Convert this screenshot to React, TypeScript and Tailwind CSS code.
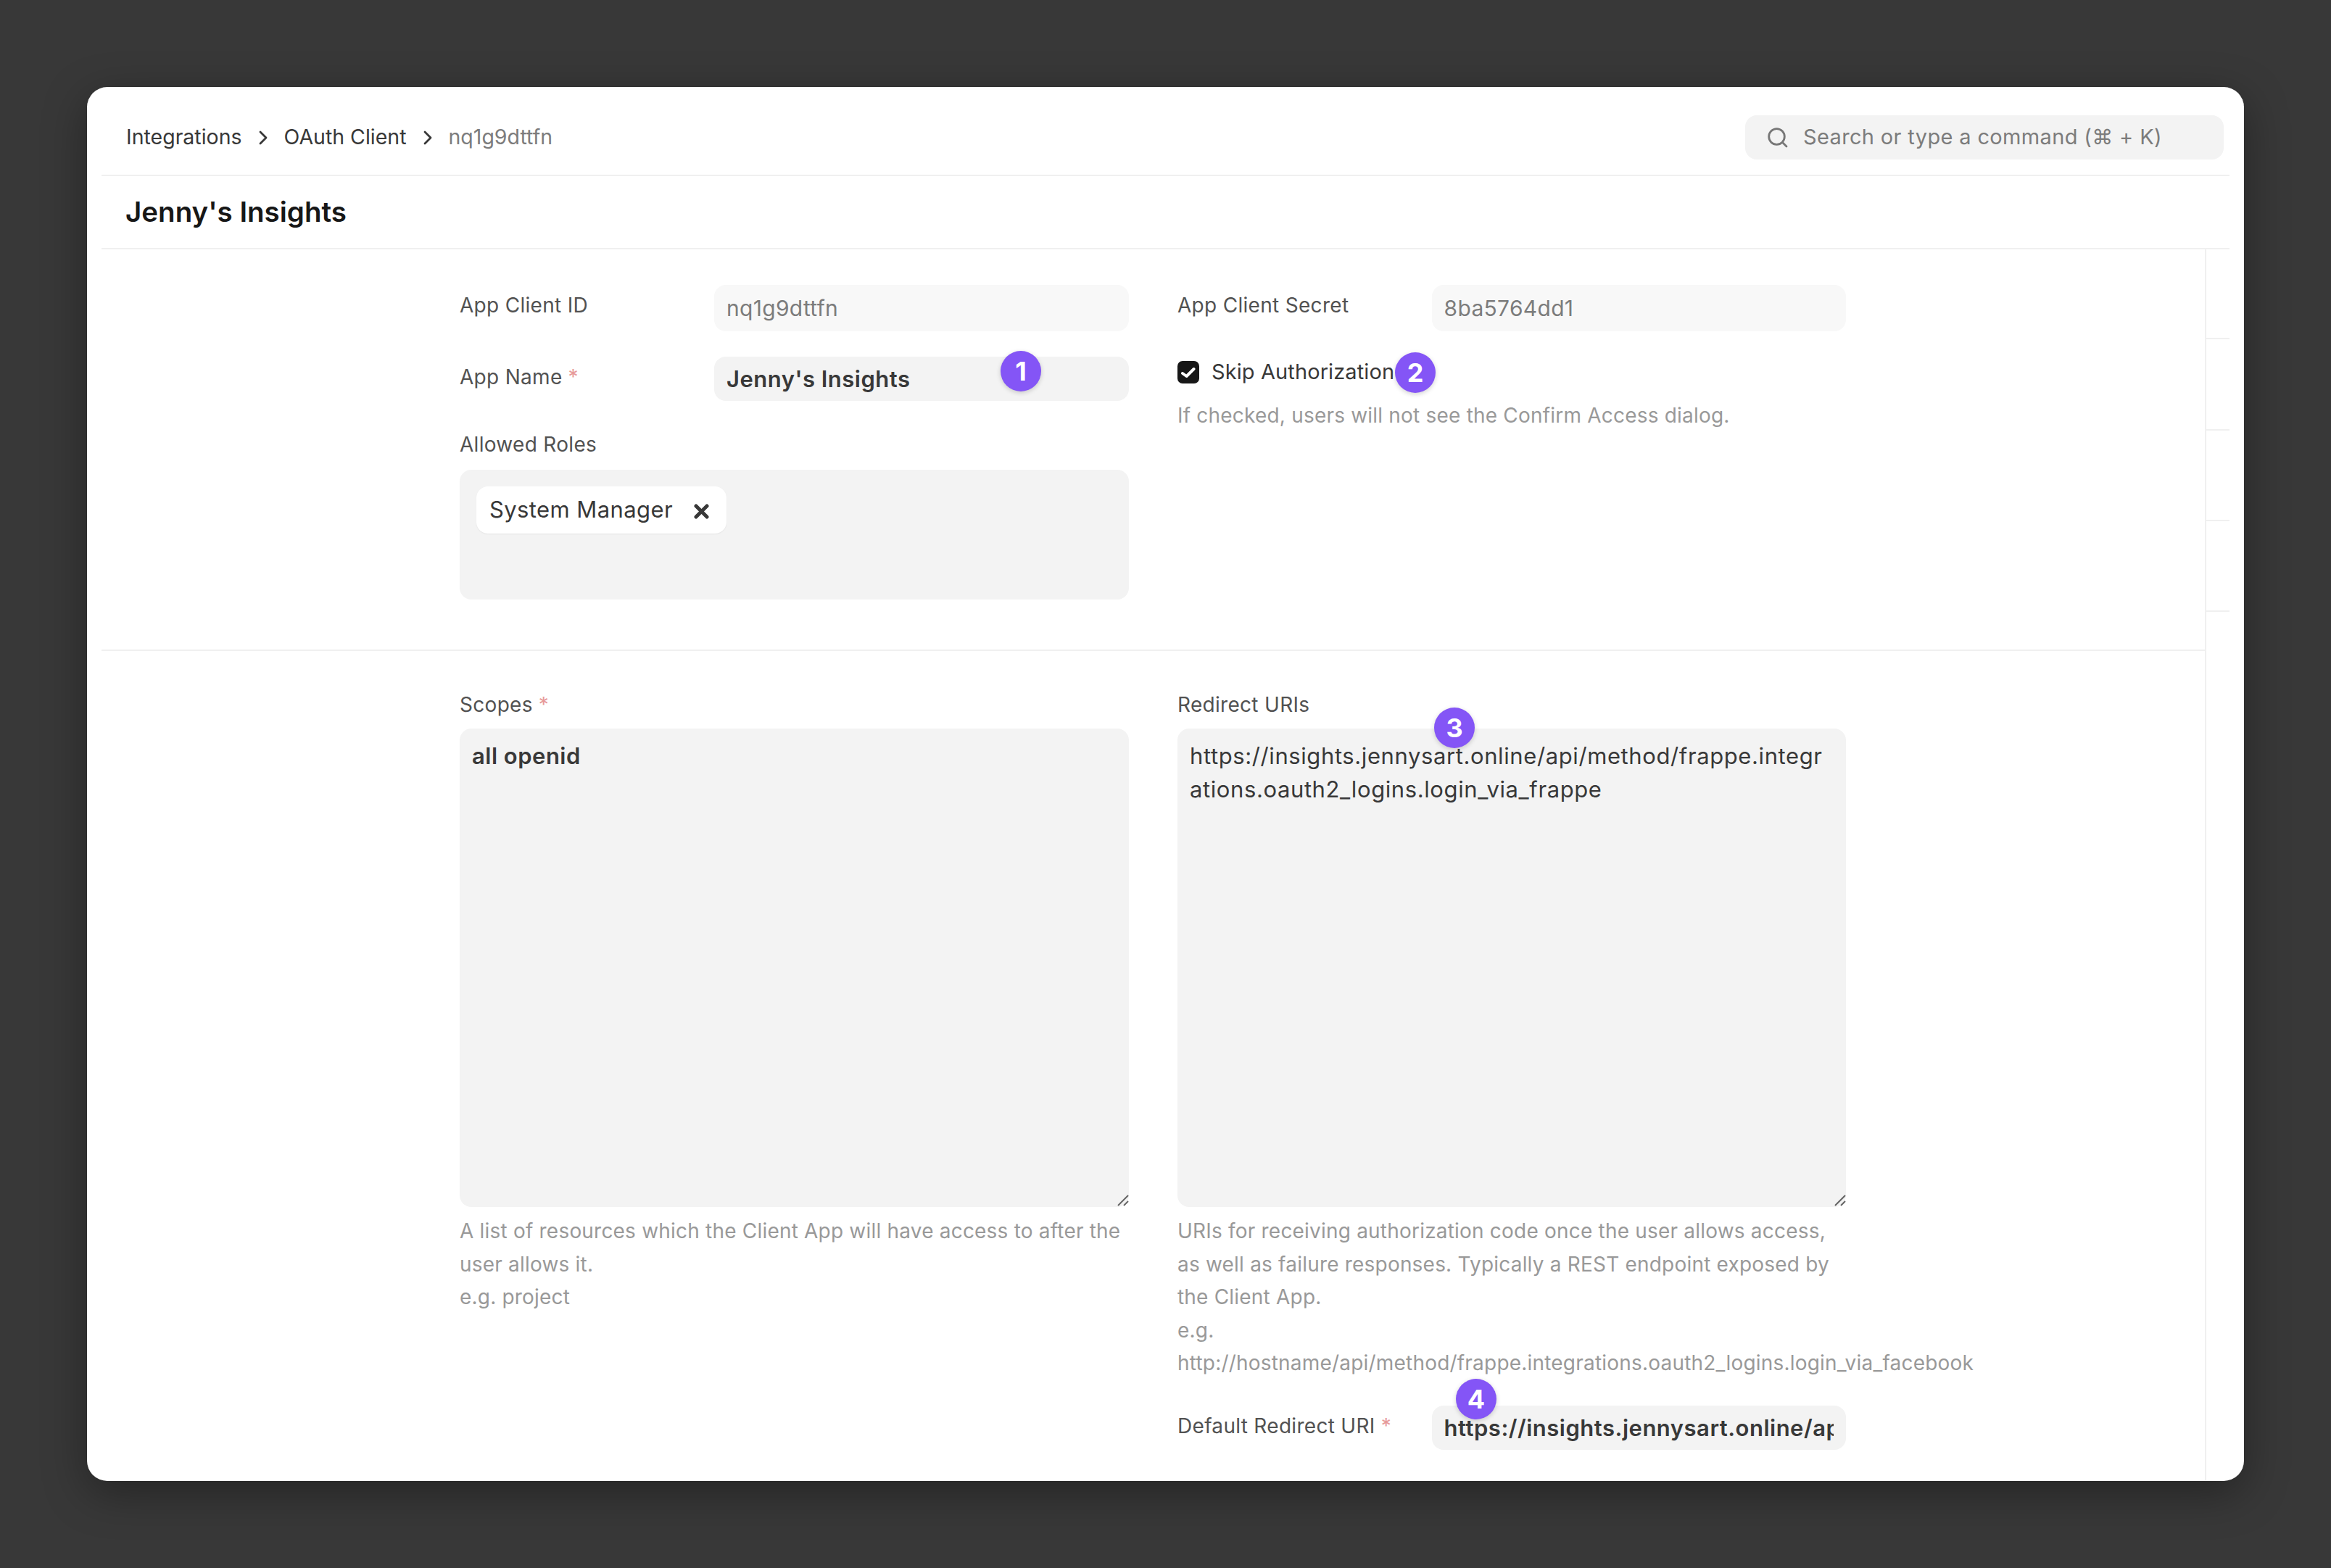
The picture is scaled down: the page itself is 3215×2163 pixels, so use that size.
import React from 'react';

const label = 'text-[28px] leading-[34px] text-[#525252] tracking-[0.3px]';
const help = 'text-[28px] leading-[45.5px] text-[#999999] tracking-[0.2px] whitespace-nowrap';

function Req() {
  return <span className="text-[#e79a9a] ml-[8px]">*</span>;
}

function Badge({ n, className }: { n: number; className: string }) {
  return (
    <div
      className={`absolute w-[56px] h-[56px] rounded-full bg-[#8455f6] text-white text-[36px] font-bold flex items-center justify-center shadow-[0_2px_6px_rgba(0,0,0,0.18)] ${className}`}
    >
      {n}
    </div>
  );
}

function ResizeGrip() {
  return (
    <svg className="absolute right-0 bottom-[1px]" width="16" height="16" viewBox="0 0 16 16" fill="none" stroke="#666666" strokeWidth="2">
      <path d="M1 15 L15 1" />
      <path d="M9 15 L15 9" />
    </svg>
  );
}

function Chevron() {
  return (
    <svg className="mx-[23px] mt-[2px]" width="12" height="20" viewBox="0 0 12 20" fill="none" stroke="#383838" strokeWidth="2.8" strokeLinecap="round" strokeLinejoin="round">
      <path d="M2 2 L10 10 L2 18" />
    </svg>
  );
}

function Field({
  labelText,
  value,
  required,
  disabled,
  h,
}: {
  labelText: string;
  value: string;
  required?: boolean;
  disabled?: boolean;
  h: string;
}) {
  return (
    <div className="flex items-start">
      <div className={`w-[351px] pt-[11px] ${label}`}>
        {labelText}
        {required && <Req />}
      </div>
      <div
        className={`w-[572px] ${h} rounded-[16px] px-[17px] flex items-center overflow-hidden ${
          disabled
            ? 'bg-[#f8f8f8] text-[#7c7c7c] font-normal text-[30px] tracking-[0.3px]'
            : 'bg-[#f3f3f3] text-[#383838] font-semibold text-[31px] tracking-[0.5px] pt-[2px]'
        }`}
      >
        <span className="overflow-hidden whitespace-nowrap">{value}</span>
      </div>
    </div>
  );
}

export default function App() {
  return (
    <div className="relative w-[3215px] h-[2163px] bg-[#383838] pt-[120px] pl-[120px] overflow-hidden font-['Inter',sans-serif]">
      <div className="w-[2975px] h-[1923px] bg-white rounded-[28px] px-[20px] flex flex-col overflow-hidden shadow-[0_16px_60px_rgba(0,0,0,0.35)]">
        {/* Top bar */}
        <div className="h-[123px] shrink-0 border-b-2 border-[#f0f0f0] pt-[39px] pb-[22px] pl-[34px] pr-[8px] flex items-center justify-between">
          <div className="flex items-center text-[28.5px] text-[#383838]">
            <span>Integrations</span>
            <Chevron />
            <span>OAuth Client</span>
            <Chevron />
            <span className="text-[#7c7c7c]">nq1g9dttfn</span>
          </div>
          <div className="w-[660px] h-[61px] rounded-[16px] bg-[#f3f3f3] flex items-center pl-[31px] text-[29px] tracking-[0.35px] text-[#7c7c7c]">
            <svg className="mr-[21px] mt-[1px]" width="28" height="28" viewBox="0 0 28 28" fill="none" stroke="#777777" strokeWidth="2.8" strokeLinecap="round">
              <circle cx="12.5" cy="12.5" r="10.8" />
              <path d="M20.5 20.5 L26 26" />
            </svg>
            <span>Search or type a command (⌘ + K)</span>
          </div>
        </div>

        {/* Title */}
        <div className="h-[101px] shrink-0 border-b-2 border-[#f0f0f0] pl-[33px] flex items-center text-[38.5px] font-semibold text-[#171717]">
          Jenny's Insights
        </div>

        <div className="flex-1 flex min-h-0">
          <div className="flex-1 min-w-0">
            {/* First section */}
            <div className="h-[554px] border-b-2 border-[#f0f0f0] pl-[494px] pt-[49px] flex gap-[67px]">
              <div className="w-[923px]">
                <Field labelText="App Client ID" value="nq1g9dttfn" disabled h="h-[64px]" />
                <div className="mt-[35px]">
                  <Field labelText="App Name" value="Jenny's Insights" required h="h-[61px]" />
                </div>
                <div className={`mt-[43px] mb-[18px] ${label}`}>Allowed Roles</div>
                <div className="h-[179px] rounded-[16px] bg-[#f3f3f3] pt-[23px] pl-[23px]">
                  <div className="inline-flex items-center h-[65px] rounded-[16px] bg-white pl-[18px] pr-[24px] text-[31px] text-[#383838] tracking-[0.4px] shadow-[0_1px_2px_rgba(0,0,0,0.06)]">
                    <span>System Manager</span>
                    <svg className="ml-[29px] mt-[3px]" width="21" height="21" viewBox="0 0 21 21" stroke="#383838" strokeWidth="5" strokeLinecap="round">
                      <path d="M3 3 L18 18" />
                      <path d="M18 3 L3 18" />
                    </svg>
                  </div>
                </div>
              </div>
              <div className="w-[922px]">
                <Field labelText="App Client Secret" value="8ba5764dd1" disabled h="h-[64px]" />
                <div className="mt-[35px] h-[42px] flex items-center">
                  <div className="w-[30px] h-[31px] rounded-[7px] bg-[#171717] flex items-center justify-center">
                    <svg width="30" height="31" viewBox="0 0 30 31" fill="none" stroke="#ffffff" strokeWidth="4" strokeLinecap="round" strokeLinejoin="round">
                      <path d="M7 17 L12.5 21 L22.5 11" />
                    </svg>
                  </div>
                  <span className="ml-[17px] text-[29px] text-[#383838] tracking-[0.1px]">Skip Authorization</span>
                </div>
                <div className={`mt-[17px] ${help}`}>If checked, users will not see the Confirm Access dialog.</div>
              </div>
            </div>

            {/* Second section */}
            <div className="pl-[494px] pt-[57px] flex gap-[67px]">
              <div className="w-[923px]">
                <div className={`mb-[16px] ${label}`}>
                  Scopes
                  <Req />
                </div>
                <div className="relative h-[660px]">
                  <textarea
                    readOnly
                    defaultValue="all openid"
                    className="w-full h-full resize-none rounded-[16px] bg-[#f3f3f3] px-[17px] pt-[15px] text-[31px] leading-[46px] font-semibold text-[#383838] tracking-[0.5px] outline-none"
                  />
                  <ResizeGrip />
                </div>
                <div className={`mt-[11px] ${help}`}>
                  A list of resources which the Client App will have access to after the
                  <br />
                  user allows it.
                  <br />
                  e.g. project
                </div>
              </div>
              <div className="w-[922px]">
                <div className={`mb-[16px] ${label}`}>Redirect URIs</div>
                <div className="relative h-[660px]">
                  <textarea
                    readOnly
                    defaultValue="https://insights.jennysart.online/api/method/frappe.integrations.oauth2_logins.login_via_frappe"
                    className="w-full h-full resize-none rounded-[16px] bg-[#f3f3f3] pl-[17px] pr-[24px] pt-[15px] text-[31px] leading-[46px] text-[#383838] tracking-[0.6px] break-all outline-none"
                  />
                  <ResizeGrip />
                </div>
                <div className={`mt-[11px] ${help}`}>
                  URIs for receiving authorization code once the user allows access,
                  <br />
                  as well as failure responses. Typically a REST endpoint exposed by
                  <br />
                  the Client App.
                  <br />
                  e.g.
                  <br />
                  http://hostname/api/method/frappe.integrations.oauth2_logins.login_via_facebook
                </div>
                <div className="mt-[35px]">
                  <Field
                    labelText="Default Redirect URI"
                    value="https://insights.jennysart.online/api/method/frappe.integrations.oauth2_logins.login_via_frappe"
                    required
                    h="h-[61px]"
                  />
                </div>
              </div>
            </div>
          </div>

          {/* Sidebar rail */}
          <div className="w-[34px] shrink-0 border-l-2 border-[#f0f0f0]">
            <div className="h-[124px] border-b-2 border-[#f0f0f0]" />
            <div className="h-[126px] border-b-2 border-[#f0f0f0]" />
            <div className="h-[125px] border-b-2 border-[#f0f0f0]" />
            <div className="h-[125px] border-b-2 border-[#f0f0f0]" />
          </div>
        </div>
      </div>

      {/* Numbered callouts */}
      <Badge n={1} className="left-[1380px] top-[484px]" />
      <Badge n={2} className="left-[1924px] top-[486px]" />
      <Badge n={3} className="left-[1978px] top-[976px]" />
      <Badge n={4} className="left-[2008px] top-[1902px]" />
    </div>
  );
}
